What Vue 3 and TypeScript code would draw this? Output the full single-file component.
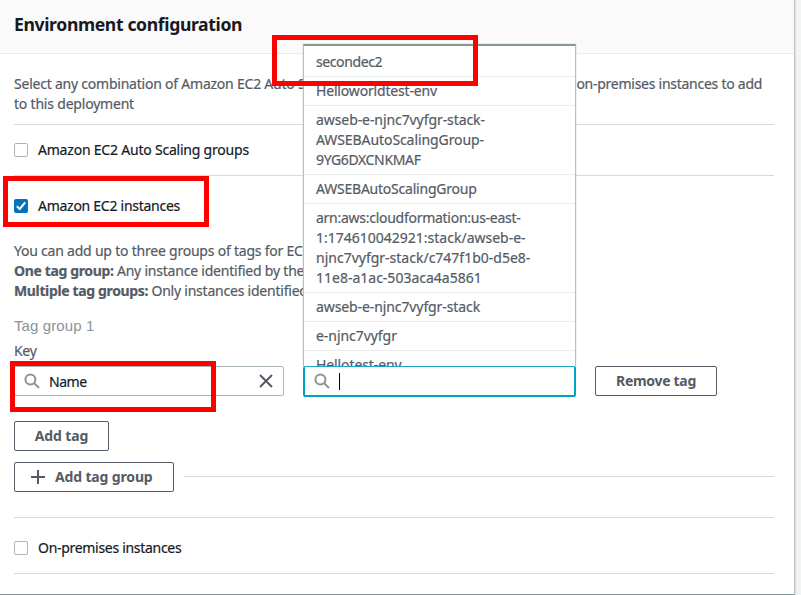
<script setup lang="ts">
import { ref } from 'vue'

const autoScaling = ref(false)
const ec2 = ref(true)
const onPremises = ref(false)

const suggestions: { lines: string[]; cls: string }[] = [
  { lines: ['secondec2'], cls: 's1' },
  { lines: ['Helloworldtest-env'], cls: 's2' },
  { lines: ['awseb-e-njnc7vyfgr-stack-', 'AWSEBAutoScalingGroup-', '9YG6DXCNKMAF'], cls: 's3' },
  { lines: ['AWSEBAutoScalingGroup'], cls: 's4' },
  {
    lines: [
      'arn:aws:cloudformation:us-east-',
      '1:174610042921:stack/awseb-e-',
      'njnc7vyfgr-stack/c747f1b0-d5e8-',
      '11e8-a1ac-503aca4a5861',
    ],
    cls: 's5',
  },
  { lines: ['awseb-e-njnc7vyfgr-stack'], cls: 's6' },
  { lines: ['e-njnc7vyfgr'], cls: 's7' },
  { lines: ['Hellotest-env'], cls: 's8' },
]
</script>

<template>
  <div class="page">
    <section class="panel">
      <header class="head"><h2><span>Environment configuration</span></h2></header>
      <div class="body">
        <p class="intro">
          <span class="i1">Select any combination of Amazon EC2 Auto Scaling groups, Amazon EC2 instances, and </span><span class="i2">on-premises instances to add</span><br />
          <span class="i3">to this deployment</span>
        </p>
        <label class="check asg" @click="autoScaling = !autoScaling">
          <span class="box" :class="{ on: autoScaling }"></span>
          <span class="c1">Amazon EC2 Auto Scaling groups</span>
        </label>
        <label class="check ec2" @click="ec2 = !ec2">
          <span class="box" :class="{ on: ec2 }">
            <svg v-if="ec2" viewBox="0 0 14 14" width="14" height="14"><path d="M2.8 7.3 5.7 10 11.2 3.4" fill="none" stroke="#fff" stroke-width="2" /></svg>
          </span>
          <span class="c2">Amazon EC2 instances</span>
        </label>
        <div class="help">
          <div class="h1">You can add up to three groups of tags for EC2</div>
          <div class="h2"><b>One tag group:</b> Any instance identified by the</div>
          <div class="h3"><b>Multiple tag groups:</b> Only instances identified</div>
        </div>
        <div class="group">Tag group 1</div>
        <div class="key"><span>Key</span></div>
        <div class="row">
          <div class="field">
            <svg class="mag" viewBox="0 0 16 16" width="16" height="16"><circle cx="6.4" cy="6.4" r="5" /><path d="M10 10 15 15" /></svg>
            <span class="name">Name</span>
            <svg class="clear" viewBox="0 0 14 14" width="14" height="14"><path d="M1 1 13 13M13 1 1 13" /></svg>
          </div>
          <div class="field active">
            <svg class="mag" viewBox="0 0 16 16" width="16" height="16"><circle cx="6.4" cy="6.4" r="5" /><path d="M10 10 15 15" /></svg>
            <i class="caret"></i>
            <ul class="menu">
              <li v-for="s in suggestions" :key="s.cls" :class="s.cls">
                <div v-for="l in s.lines" :key="l"><span>{{ l }}</span></div>
              </li>
            </ul>
          </div>
          <button class="btn remove"><span>Remove tag</span></button>
        </div>
        <button class="btn add"><span>Add tag</span></button>
        <div class="grouprow">
          <button class="btn addgroup">
            <svg viewBox="0 0 14 14" width="14" height="14"><path d="M7 0V14M0 7H14" /></svg>
            <span>Add tag group</span>
          </button>
          <i class="line"></i>
        </div>
        <label class="check prem" @click="onPremises = !onPremises">
          <span class="box" :class="{ on: onPremises }"></span>
          <span class="c3">On-premises instances</span>
        </label>
      </div>
    </section>
    <div class="mark m1"></div>
    <div class="mark m2"></div>
    <div class="mark m3"></div>
  </div>
</template>

<style>
body { background: #f2f3f3; }
</style>

<style scoped>
* { box-sizing: border-box; }
.page { position: relative; width: 801px; height: 595px; overflow: hidden; background: #f2f3f3; font: 14px/20px "Noto Sans", sans-serif; color: #545b64; -webkit-text-stroke: 0.2px; }
.panel { width: 795px; height: 595px; background: #fff; border-right: 1px solid #b9c1c4; border-bottom: 1px solid #879596; box-shadow: 1px 0 1px #dfe3e5; }
.head { height: 54px; background: #fafafa; border-bottom: 1px solid #eaeded; padding: 12px 0 0 14px; }
h2 { margin: 0; font-size: 17.6px; line-height: 24px; font-weight: 700; color: #16191f; white-space: nowrap; letter-spacing: -0.37px; -webkit-text-stroke: 0; }
.body { width: 774px; padding: 20px 0 0 14px; }
.intro { margin: 0; height: 51px; border-bottom: 1px solid #d5dbdb; white-space: nowrap; }
.i1 { letter-spacing: -0.225px; }
.i2 { letter-spacing: -0.26px; }
.i3 { letter-spacing: -0.2px; }
.check { display: flex; align-items: center; gap: 10px; color: #16191f; white-space: nowrap; }
.c1 { letter-spacing: -0.21px; }
.c2 { letter-spacing: -0.27px; }
.c3 { letter-spacing: -0.3px; }
.asg { height: 51px; border-bottom: 1px solid #d5dbdb; }
.ec2 { height: 60px; }
.box { width: 14px; height: 14px; border: 1px solid #aab7b8; border-radius: 2px; background: #fff; flex: none; }
.box.on { background: #0073bb; border: 0; }
.box svg { display: block; }
.help { height: 60px; margin-top: 5px; white-space: nowrap; letter-spacing: -0.22px; }
.help b { letter-spacing: -0.36px; }
.group { margin-top: 15px; font: 15px/20px "Liberation Sans", sans-serif; color: #879596; letter-spacing: 0.1px; -webkit-text-stroke: 0; }
.key { margin-top: 5px; height: 25px; letter-spacing: -0.3px; }
.row { display: flex; height: 31px; }
.field { position: relative; width: 270px; height: 30px; border: 1px solid #aab7b8; border-radius: 2px; display: flex; align-items: center; padding: 0 10px 0 9px; color: #16191f; }
.field svg { fill: none; flex: none; }
.mag { stroke: #879596; stroke-width: 2; }
.name { margin-left: 9px; padding-top: 2px; flex: 1; letter-spacing: -0.45px; }
.clear { stroke: #545b64; stroke-width: 2; }
.active { margin-left: 19px; width: 273px; height: 31px; border: 2px solid #00a1c9; border-top-width: 1px; border-radius: 2px; }
.caret { width: 1px; height: 17px; background: #000; margin-left: 9px; }
.menu { position: absolute; left: -2px; bottom: 29px; width: 273px; height: 322px; margin: 0; padding: 2px 0 0; list-style: none; overflow: hidden; background: #fff; border: 1px solid #b5bfc2; border-top: 2px solid #879596; border-bottom: 0; color: #545b64; white-space: nowrap; box-shadow: 0 0 1px #aab7b8; }
.menu li { padding: 4px 11px 4px 12px; border-bottom: 1px solid #eaeded; }
.s1 { letter-spacing: -0.4px; }
.s2 { letter-spacing: -0.17px; }
.s3 { letter-spacing: -0.08px; }
.s3 div:last-child { letter-spacing: -0.35px; }
.s4 { letter-spacing: -0.22px; }
.s5 div:first-child { letter-spacing: -0.27px; }
.s6, .s8 { letter-spacing: -0.1px; }
.s7 { letter-spacing: -0.05px; }
.btn { display: flex; align-items: center; justify-content: center; height: 30px; border: 1px solid #545b64; border-radius: 2px; background: #fff; padding: 0; margin: 0; color: #545b64; font: 700 14px/20px "Noto Sans", sans-serif; white-space: nowrap; -webkit-text-stroke: 0; }
.remove { width: 122px; margin-left: 19px; letter-spacing: -0.3px; }
.add { width: 95px; margin-top: 24px; letter-spacing: -0.1px; }
.grouprow { display: flex; align-items: center; height: 30px; margin-top: 11px; gap: 10px; }
.addgroup { width: 160px; gap: 10px; justify-content: flex-start; padding-left: 16px; letter-spacing: -0.15px; }
.addgroup svg { stroke: #545b64; stroke-width: 2; }
.line { flex: 1; height: 1px; margin-bottom: 1px; background: #d5dbdb; }
.prem { margin-top: 25px; height: 57px; padding-top: 4px; border-top: 1px solid #d5dbdb; border-bottom: 1px solid #d5dbdb; }
.mark { position: absolute; width: 206px; height: 51px; border: 5px solid #f00; }
.m1 { left: 272px; top: 35px; }
.m2 { left: 3px; top: 176px; }
.m3 { left: 10px; top: 361px; }
</style>
